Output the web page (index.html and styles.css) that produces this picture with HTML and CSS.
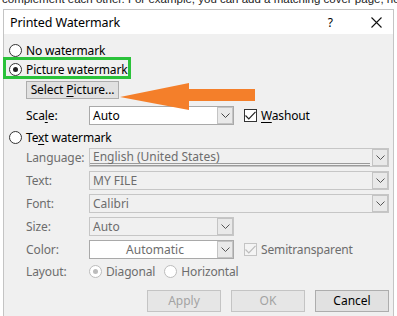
FILE: index.html
```html
<!DOCTYPE html>
<html>
<head>
<meta charset="utf-8">
<link rel="stylesheet" href="styles.css">
</head>
<body>
<div class="page">
  <p class="doc-line">complement each other. For example, you can add a matching cover page, header</p>
</div>
<div class="dialog">
  <div class="titlebar">
    <span class="title">Printed Watermark</span>
    <span class="help">?</span>
    <svg class="close" width="11" height="11" viewBox="0 0 11 11"><path d="M0.5 0.5L10.5 10.5M10.5 0.5L0.5 10.5" stroke="#111" stroke-width="1.1" fill="none"/></svg>
  </div>
  <div class="body">
    <div class="row radio-row r1">
      <span class="radio"></span><span class="lbl"><u>N</u>o watermark</span>
    </div>
    <div class="row radio-row r2">
      <span class="radio checked"></span><span class="lbl">P<u>i</u>cture watermark</span>
    </div>
    <div class="row r3">
      <button class="btn select-btn">Select <u>P</u>icture...</button>
    </div>
    <div class="row field-row r4">
      <span class="flabel">Sca<u>l</u>e:</span>
      <div class="combo narrow white"><span class="ctext">Auto</span><span class="dd"><svg width="9" height="5" viewBox="0 0 9 5"><path d="M0.5 0.5L4.5 4.5L8.5 0.5" stroke="#444" fill="none"/></svg></span></div>
      <span class="check on"><svg width="11" height="9" viewBox="0 0 11 9"><path d="M0.5 4.5L3.8 7.8L10.5 0.8" stroke="#222" stroke-width="1.2" fill="none"/></svg></span>
      <span class="lbl"><u>W</u>ashout</span>
    </div>
    <div class="row radio-row r5">
      <span class="radio"></span><span class="lbl">Te<u>x</u>t watermark</span>
    </div>
    <div class="row field-row r6">
      <span class="flabel dis">Language:</span>
      <div class="combo wide disabled"><span class="ctext dbl">English (United States)</span><span class="dd"><svg width="9" height="5" viewBox="0 0 9 5"><path d="M0.5 0.5L4.5 4.5L8.5 0.5" stroke="#555" fill="none"/></svg></span></div>
    </div>
    <div class="row field-row r7">
      <span class="flabel dis">Text:</span>
      <div class="combo wide disabled"><span class="ctext">MY FILE</span><span class="dd"><svg width="9" height="5" viewBox="0 0 9 5"><path d="M0.5 0.5L4.5 4.5L8.5 0.5" stroke="#555" fill="none"/></svg></span></div>
    </div>
    <div class="row field-row r7">
      <span class="flabel dis">Font:</span>
      <div class="combo wide disabled"><span class="ctext">Calibri</span><span class="dd"><svg width="9" height="5" viewBox="0 0 9 5"><path d="M0.5 0.5L4.5 4.5L8.5 0.5" stroke="#555" fill="none"/></svg></span></div>
    </div>
    <div class="row field-row r7">
      <span class="flabel dis">Size:</span>
      <div class="combo narrow disabled"><span class="ctext">Auto</span><span class="dd"><svg width="9" height="5" viewBox="0 0 9 5"><path d="M0.5 0.5L4.5 4.5L8.5 0.5" stroke="#555" fill="none"/></svg></span></div>
    </div>
    <div class="row field-row r7">
      <span class="flabel dis">Color:</span>
      <div class="combo narrow white dis-text"><span class="ctext center">Automatic</span><span class="dd"><svg width="9" height="5" viewBox="0 0 9 5"><path d="M0.5 0.5L4.5 4.5L8.5 0.5" stroke="#555" fill="none"/></svg></span></div>
      <span class="check on dis-check"><svg width="11" height="9" viewBox="0 0 11 9"><path d="M0.5 4.5L3.8 7.8L10.5 0.8" stroke="#bcbcbc" stroke-width="1.2" fill="none"/></svg></span>
      <span class="lbl dis">Semitransparent</span>
    </div>
    <div class="row field-row r11">
      <span class="flabel dis">Layout:</span>
      <span class="radio dis-radio checked"></span><span class="lbl dis gap1">Diagonal</span>
      <span class="radio dis-radio"></span><span class="lbl dis">Horizontal</span>
    </div>
    <div class="row buttons">
      <button class="btn dlg disabled-btn">Apply</button>
      <button class="btn dlg disabled-btn">OK</button>
      <button class="btn dlg">Cancel</button>
    </div>
  </div>
</div>
<div class="green-box"></div>
<svg class="arrow" width="140" height="32" viewBox="0 0 140 32"><polygon points="0,15 69,1 69,7 135,7 135,19 69,19 69,28" fill="#f47f2a"/></svg>
</body>
</html>
```
FILE: styles.css
```css
html, body {
  margin: 0;
  padding: 0;
}
body {
  width: 397px;
  height: 316px;
  overflow: hidden;
  background: #ffffff;
  position: relative;
  font-family: "Noto Sans", "Open Sans", sans-serif;
  font-size: 12px;
  color: #000;
}
.doc-line {
  margin: 0;
  position: relative;
  top: -8px;
  left: 2px;
  white-space: nowrap;
  font-family: "Liberation Sans", sans-serif;
  font-size: 11.5px;
  line-height: 14px;
  color: #222;
}
.dialog {
  position: absolute;
  left: 3px;
  top: 9px;
  width: 389px;
  height: 320px;
  border: 1px solid #c4c4c4;
  background: #f0f0f0;
  display: flex;
  flex-direction: column;
}
.titlebar {
  height: 24px;
  background: #ffffff;
  display: flex;
  align-items: center;
  padding-left: 6px;
  flex: none;
}
.title {
  font-size: 12.5px;
  letter-spacing: -0.1px;
  flex: 1;
  padding-top: 1px;
}
.help {
  font-size: 12px;
  margin-right: 38px;
  padding-top: 1px;
}
.close {
  margin-right: 11px;
}
.body {
  display: flex;
  flex-direction: column;
  padding-left: 5px;
}
.row {
  display: flex;
  align-items: center;
  flex: none;
}
.radio-row { height: 16px; }
.r1 { margin-top: 8px; }
.r2 { margin-top: 3px; }
.r3 { margin-top: 4px; padding-left: 17px; height: 18px; }
.r4 { margin-top: 7px; }
.r5 { margin-top: 4px; }
.r6 { margin-top: 3px; }
.r7 { margin-top: 4px; }
.r11 { margin-top: 4px; height: 16px; }
.radio {
  width: 11px;
  height: 11px;
  border: 1px solid #333;
  border-radius: 50%;
  background: #fff;
  position: relative;
  flex: none;
  margin-right: 4px;
}
.radio.checked::after {
  content: "";
  position: absolute;
  left: 3px;
  top: 3px;
  width: 5px;
  height: 5px;
  border-radius: 50%;
  background: #222;
}
.dis-radio {
  border-color: #bcbcbc;
}
.dis-radio.checked::after {
  background: #bcbcbc;
}
.lbl {
  white-space: nowrap;
  letter-spacing: -0.15px;
}
.lbl u, .flabel u, .btn u {
  text-decoration-thickness: 1px;
  text-underline-offset: 2px;
}
.dis { color: #6d6d6d; }
.gap1 { margin-right: 9px; }
.btn {
  font-family: inherit;
  font-size: 12px;
  background: #e1e1e1;
  border: 1px solid #adadad;
  color: #000;
  padding: 0;
  margin: 0;
  height: 18px;
  line-height: 14px;
}
.select-btn {
  width: 93px;
  letter-spacing: -0.1px;
}
.field-row { height: 19px; padding-left: 17px; }
.field-row.r11 { height: 16px; }
.flabel {
  width: 63px;
  flex: none;
  white-space: nowrap;
  letter-spacing: -0.1px;
}
.combo {
  height: 17px;
  border: 1px solid #adadad;
  display: flex;
  align-items: center;
  flex: none;
  box-sizing: content-box;
}
.combo.narrow { width: 143px; margin-right: 10px; }
.combo.wide { width: 298px; }
.combo.white { background: #fff; border-color: #a9a9a9; }
.combo.disabled { background: #f0f0f0; border-color: #c6c6c6; }
.ctext {
  flex: 1;
  padding-left: 3px;
  white-space: nowrap;
  overflow: hidden;
  line-height: 15px;
}
.disabled .ctext, .dis-text .ctext { color: #6d6d6d; }
.ctext.center { text-align: center; }
.ctext.dbl {
  border-bottom: 3px double #9a9a9a;
  margin-right: 2px;
  line-height: 14px;
  height: 13px;
  overflow: visible;
}
.dd {
  width: 14px;
  height: 15px;
  border: 1px solid #c4c4c4;
  background: #e9e9e9;
  display: flex;
  align-items: center;
  justify-content: center;
  flex: none;
}
.check {
  width: 11px;
  height: 11px;
  border: 1px solid #333;
  background: #fff;
  display: flex;
  align-items: center;
  justify-content: center;
  margin-right: 4px;
  flex: none;
}
.dis-check { border-color: #c4c4c4; background: #f4f4f4; }
.buttons {
  margin-top: 11px;
  height: 22px;
  padding-left: 138px;
  gap: 11px;
}
.btn.dlg {
  width: 74px;
  height: 22px;
}
.btn.dlg + .btn.dlg { margin-left: -1px; }
.disabled-btn {
  color: #a3a3a3;
  border-color: #c4c4c4;
  background: #e6e6e6;
}
.green-box {
  position: absolute;
  left: 3px;
  top: 57px;
  width: 122px;
  height: 16px;
  border: 3px solid #2ac23a;
}
.arrow {
  position: absolute;
  left: 120px;
  top: 82px;
}
```
